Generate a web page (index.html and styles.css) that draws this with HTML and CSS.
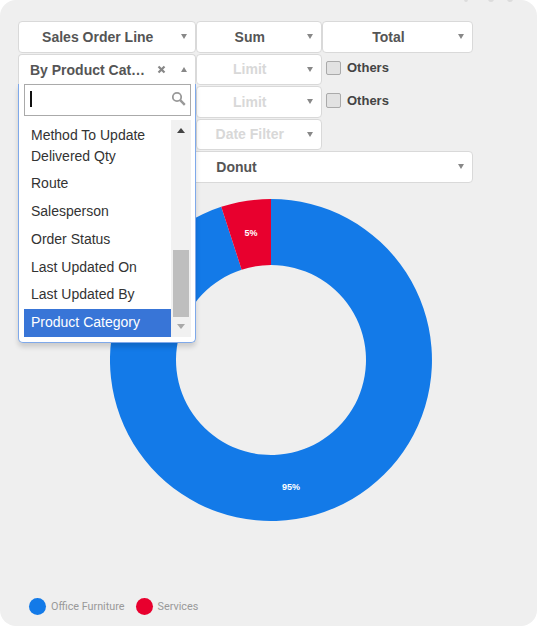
FILE: index.html
```html
<!DOCTYPE html>
<html lang="en">
<head>
  <meta charset="UTF-8">
  <title>Chart Options</title>
  <link rel="stylesheet" href="styles.css">
</head>
<body>

<div class="panel">
  <div class="top-icons">
    <span class="top-dot dot-a"></span>
    <span class="top-dot dot-b"></span>
    <span class="top-dot dot-c"></span>
  </div>

  <div class="options">
    <div class="pick"><span class="pick-text">Sales Order Line</span><span class="arrow"></span></div>
    <div class="pick"><span class="pick-text">Sum</span><span class="arrow"></span></div>
    <div class="pick"><span class="pick-text">Total</span><span class="arrow"></span></div>

    <div class="pick-open">
      <div class="pick open">
        <span class="pick-text">By Product Cat…</span>
        <svg class="clear" width="9" height="9" viewBox="0 0 9 9"><path d="M1.5 1.5l6 6M7.5 1.5l-6 6" stroke="#888" stroke-width="2.2" fill="none"/></svg>
        <span class="arrow up"></span>
      </div>
      <div class="dropdown">
        <div class="search">
          <span class="caret"></span>
          <svg class="search-icon" width="15" height="15" viewBox="0 0 15 15"><circle cx="6" cy="6" r="4.2" stroke="#999" stroke-width="1.8" fill="none"/><path d="M9.2 9.2l4.6 4.6" stroke="#999" stroke-width="2.4" fill="none"/></svg>
        </div>
        <div class="results">
          <ul class="list">
            <li>Method To Update Delivered Qty</li>
            <li>Route</li>
            <li>Salesperson</li>
            <li>Order Status</li>
            <li>Last Updated On</li>
            <li>Last Updated By</li>
            <li class="selected">Product Category</li>
          </ul>
          <div class="scrollbar">
            <span class="scroll-up"></span>
            <span class="thumb"></span>
            <span class="scroll-down"></span>
          </div>
        </div>
      </div>
    </div>
    <div class="pick off"><span class="pick-text">Limit</span><span class="arrow"></span></div>
    <label class="check"><span class="box"></span>Others</label>

    <div class="pick off col-2"><span class="pick-text">Limit</span><span class="arrow"></span></div>
    <label class="check"><span class="box"></span>Others</label>

    <div class="pick off col-2"><span class="pick-text">Date Filter</span><span class="arrow"></span></div>

    <div class="pick wide"><span class="pick-text">Donut</span><span class="arrow"></span></div>
  </div>

  <svg class="chart" width="322" height="322" viewBox="0 0 322 322">
    <path fill="#137ae8" d="M161 0A161 161 0 1 1 111.25 7.87L131.64 70.65A95 95 0 1 0 161 66Z"/>
    <path fill="#e8002e" d="M161 0L161 66A95 95 0 0 0 131.64 70.65L111.25 7.87A161 161 0 0 1 161 0Z"/>
    <text class="slice-label" x="141" y="37">5%</text>
    <text class="slice-label" x="181" y="291">95%</text>
  </svg>

  <div class="legend">
    <span class="legend-dot blue"></span><span class="legend-name">Office Furniture</span>
    <span class="legend-dot red"></span><span class="legend-name">Services</span>
  </div>
</div>

</body>
</html>
```

FILE: styles.css
```css
* {
  box-sizing: border-box;
}

body {
  margin: 0;
  background: #fff;
  font-family: "Liberation Sans", Arial, sans-serif;
}

.panel {
  position: relative;
  width: 537px;
  height: 626px;
  padding: 21px 0 0 18px;
  background: #efefef;
  border-radius: 16px;
  overflow: hidden;
}

/* icons cut off by the top edge */
.top-dot {
  position: absolute;
  top: -4px;
  width: 6px;
  height: 6px;
  border-radius: 50%;
  background: #dcdcdc;
}

.dot-a { left: 464px; width: 4px; }
.dot-b { left: 488px; }
.dot-c { left: 507px; }

.options {
  display: grid;
  grid-template-columns: 177.5px 126.5px 151px;
  grid-auto-rows: 31.5px;
  row-gap: 1px;
  width: 455px;
}

.pick {
  display: flex;
  align-items: center;
  height: 100%;
  padding: 0 8px 0 10px;
  background: #fff;
  border: 1px solid #d9d9d9;
  border-radius: 4px;
  color: #555;
  font-size: 14px;
  font-weight: bold;
}

.pick-text {
  flex: 1;
  text-align: center;
  padding-right: 14px;
  white-space: nowrap;
}

.arrow {
  width: 0;
  height: 0;
  border-left: 3.5px solid transparent;
  border-right: 3.5px solid transparent;
  border-top: 5px solid #888;
}

.arrow.up {
  border-top: 0;
  border-bottom: 5px solid #888;
}

.off {
  color: #d8d8d8;
}

.col-2 {
  grid-column: 2;
}

.wide {
  grid-column: 1 / 4;
}

.pick-open {
  position: relative;
  z-index: 2;
}

.open {
  border-bottom: 0;
  border-radius: 4px 4px 0 0;
  padding-left: 11px;
}

.open .pick-text {
  padding-right: 0;
  text-align: left;
}

.clear {
  margin-right: 15px;
}

.dropdown {
  position: absolute;
  top: 30px;
  left: 0;
  width: 177.5px;
  height: 259px;
  padding: 0 4px 5px 5px;
  background: #fff;
  border: 1px solid #7fa9ea;
  border-top: 0;
  border-radius: 0 0 5px 5px;
  box-shadow: 0 4px 5px rgba(0, 0, 0, 0.15);
}

.search {
  display: flex;
  align-items: center;
  justify-content: space-between;
  height: 32px;
  padding: 0 4px 2px 5px;
  border: 1px solid #aaa;
}

.caret {
  width: 2px;
  height: 16px;
  background: #111;
}

.results {
  display: flex;
  height: 217px;
  margin-top: 4px;
}

.list {
  flex: 1;
  display: flex;
  flex-direction: column;
  justify-content: flex-end;
  margin: 0;
  padding: 0;
  list-style: none;
  color: #333;
  font-size: 14px;
  line-height: 21px;
}

.list li {
  padding: 3.4px 7px;
}

.list li:first-child {
  padding-bottom: 2.4px;
}

.list .selected {
  background: #3875d7;
  color: #fff;
}

.scrollbar {
  position: relative;
  display: flex;
  flex-direction: column;
  align-items: center;
  width: 20px;
  background: #f1f1f1;
}

.thumb {
  position: absolute;
  top: 130px;
  left: 2px;
  width: 16px;
  height: 67px;
  background: #bebebe;
}

.scroll-up,
.scroll-down {
  position: absolute;
  width: 0;
  height: 0;
  border-left: 4.5px solid transparent;
  border-right: 4.5px solid transparent;
}

.scroll-up {
  top: 8px;
  border-bottom: 5px solid #444;
}

.scroll-down {
  bottom: 8px;
  border-top: 5px solid #a8a8a8;
}

.check {
  display: flex;
  align-items: center;
  gap: 6.5px;
  height: 28.5px;
  padding-left: 4px;
  color: #444;
  font-size: 13px;
  font-weight: bold;
}

.box {
  width: 14.5px;
  height: 14.5px;
  background: #e2e2e2;
  border: 1px solid #aaa;
  border-radius: 2px;
}

.chart {
  display: block;
  margin: 16.5px 0 0 92px;
}

.slice-label {
  fill: #fff;
  font-size: 9px;
  font-weight: bold;
  text-anchor: middle;
}

.legend {
  display: flex;
  align-items: center;
  margin: 76.5px 0 0 11px;
  color: #999;
  font-family: Roboto, sans-serif;
  font-size: 10.8px;
}

.legend-dot {
  width: 17px;
  height: 17px;
  border-radius: 50%;
}

.legend-name {
  margin: 0 11px 0 5px;
}

.blue { background: #137ae8; }
.red { background: #e8002e; }
```
